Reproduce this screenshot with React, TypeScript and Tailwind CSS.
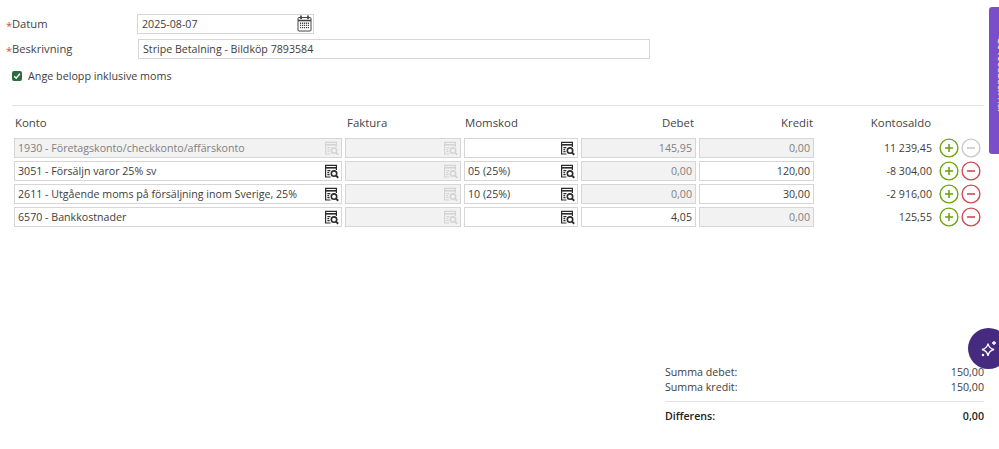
import React from "react";

const SearchIcon = ({ muted }: { muted?: boolean }) => (
  <svg width="15" height="15" viewBox="0 0 15 15" fill="none" stroke={muted ? "#d4d4d4" : "#2b2b2b"} strokeWidth="1.2" className="shrink-0">
    <path d="M6.5 13H1.6V1.4H12.4V6" />
    <path d="M1.6 3.8H12.4" strokeWidth="1.6" />
    <path d="M3.4 6.6H6.4M3.4 8.6H5.2M3.4 10.6H5.6" />
    <circle cx="10" cy="9.6" r="2.7" strokeWidth="1.6" />
    <path d="M12 11.6L14.2 13.7" strokeWidth="1.9" />
  </svg>
);

const CalendarIcon = () => (
  <svg width="15" height="17" viewBox="0 0 15 17" fill="none" stroke="#444" strokeWidth="1">
    <rect x="1" y="2.5" width="13" height="13.5" rx="1" />
    <path d="M1 5.5H14" strokeWidth="1.6" />
    <path d="M4 0.5V4M11 0.5V4" strokeWidth="1.7" />
    <path d="M3 8.2H12M3 10.4H12M3 12.6H12" strokeDasharray="1.2 0.8" strokeWidth="1.4" />
  </svg>
);

const Field = ({ w, value, disabled, icon, muted, right }: { w: string; value?: string; disabled?: boolean; icon?: boolean; muted?: boolean; right?: boolean }) => (
  <div className={`${w} h-[20px] shrink-0 flex items-center border border-[#d6d6d6] pl-[3px] pr-[2px] whitespace-nowrap ${disabled ? "bg-[#f2f2f2] text-[#808080]" : "bg-white text-[#3d3d3d]"} ${right ? "justify-end" : "justify-between"}`}>
    <span className={right ? "pr-[1px]" : ""}>{value}</span>
    {icon && <SearchIcon muted={muted} />}
  </div>
);

const RoundBtn = ({ kind }: { kind: "plus" | "minus" | "off" }) => {
  const color = kind === "plus" ? "#6fa50f" : kind === "minus" ? "#cf4a55" : "#c9c9c9";
  return (
    <svg width="20" height="20" viewBox="0 0 20 20" fill="none" stroke={color} className="shrink-0">
      <circle cx="10" cy="10" r="8.9" strokeWidth="1.4" />
      <path d="M6 10H14" strokeWidth="1.6" />
      {kind === "plus" && <path d="M10 6V14" strokeWidth="1.6" />}
    </svg>
  );
};

const Star = () => <span className="text-[#b5545a] inline-block w-[6px] translate-y-[2px]">*</span>;

const rows = [
  { konto: "1930 - Företagskonto/checkkonto/affärskonto", kd: true, moms: "", debet: "145,95", dd: true, kredit: "0,00", krd: true, saldo: "11 239,45", off: true },
  { konto: "3051 - Försäljn varor 25% sv", kd: false, moms: "05 (25%)", debet: "0,00", dd: true, kredit: "120,00", krd: false, saldo: "-8 304,00", off: false },
  { konto: "2611 - Utgående moms på försäljning inom Sverige, 25%", kd: false, moms: "10 (25%)", debet: "0,00", dd: true, kredit: "30,00", krd: false, saldo: "-2 916,00", off: false },
  { konto: "6570 - Bankkostnader", kd: false, moms: "", debet: "4,05", dd: false, kredit: "0,00", krd: true, saldo: "125,55", off: false },
];

export default function App() {
  return (
    <div className="relative w-[999px] h-[449px] overflow-hidden bg-white text-[10.65px] leading-[16px] text-[#3d3d3d] font-['Open_Sans','Noto_Sans',sans-serif]">
      <div className="pt-[14px] pl-[6px]">
        <div className="flex items-center h-[19px]">
          <span className="w-[131px] text-[#444] text-[11.2px]"><Star />Datum</span>
          <div className="w-[177px] h-[20px] flex items-center justify-between border border-[#d6d6d6] pl-[4px] pr-[1px]">
            <span>2025-08-07</span>
            <CalendarIcon />
          </div>
        </div>
        <div className="flex items-center h-[20px] mt-[6px]">
          <span className="w-[132px] text-[#444] text-[11.2px]"><Star />Beskrivning</span>
          <div className="w-[512px] h-[20px] flex items-center border border-[#d6d6d6] pl-[4px]">Stripe Betalning - Bildköp 7893584</div>
        </div>
        <div className="flex items-center gap-[6px] ml-[6px] mt-[9px] h-[16px]">
          <span className="w-[10px] h-[10px] rounded-[2px] bg-[#2e6b3e] flex items-center justify-center">
            <svg width="8" height="8" viewBox="0 0 8 8" fill="none" stroke="#fff" strokeWidth="1.5"><path d="M1.2 4.2L3.2 6.2L6.9 1.8" /></svg>
          </span>
          <span className="text-[10.75px]">Ange belopp inklusive moms</span>
        </div>
      </div>

      <div className="mx-[12px] w-[972px] mt-[21px] border-t border-[#e4e4e4]" />

      <div className="pl-[15px] mt-[9px] flex h-[16px] text-[#444] text-[11.4px]">
        <span className="w-[332px]">Konto</span>
        <span className="w-[118px]">Faktura</span>
        <span className="w-[115px]">Momskod</span>
        <span className="w-[114px] text-right">Debet</span>
        <span className="w-[119px] text-right">Kredit</span>
        <span className="w-[118px] text-right">Kontosaldo</span>
      </div>

      <div className="pl-[14px] mt-[7px] flex flex-col gap-[3px]">
        {rows.map((r) => (
          <div key={r.konto} className="flex items-center gap-[3px]">
            <Field w="w-[328px]" value={r.konto} disabled={r.kd} icon muted={r.kd} />
            <Field w="w-[116px]" disabled icon muted />
            <Field w="w-[114px]" value={r.moms} icon />
            <Field w="w-[115px]" value={r.debet} disabled={r.dd} right />
            <Field w="w-[115px]" value={r.kredit} disabled={r.krd} right />
            <span className="w-[115px] text-right">{r.saldo}</span>
            <div className="ml-[4px] flex gap-[2px]">
              <RoundBtn kind="plus" />
              <RoundBtn kind={r.off ? "off" : "minus"} />
            </div>
          </div>
        ))}
      </div>

      <div className="ml-[665px] w-[319px] mt-[137px]">
        <div className="flex justify-between h-[15px] items-center"><span>Summa debet:</span><span>150,00</span></div>
        <div className="flex justify-between h-[15px] items-center"><span>Summa kredit:</span><span>150,00</span></div>
        <div className="mt-[7px] border-t border-[#e4e4e4]" />
        <div className="mt-[6px] flex justify-between font-semibold text-[#222]"><span>Differens:</span><span>0,00</span></div>
      </div>

      <div className="absolute left-[989px] top-[7px] w-[14px] h-[147px] rounded-[3px] bg-[#7a4ecb] overflow-hidden">
        <span className="absolute left-[8px] top-[30px] text-white text-[10px] leading-[10px] whitespace-nowrap [writing-mode:vertical-rl]">Ge feedback här</span>
      </div>

      <div className="absolute left-[968px] top-[328px] w-[41px] h-[41px] rounded-full bg-[#452a7f] flex items-center justify-start pl-[12px]">
        <svg width="18" height="18" viewBox="0 0 18 18" fill="none" stroke="#fff" strokeWidth="1.3">
          <path d="M8 3.5C8.6 7 10 8.6 14 9.5C10 10.4 8.6 12 8 16C7.4 12 6 10.4 2 9.5C6 8.6 7.4 7 8 3.5Z" />
          <path d="M14 1V5M12 3H16" />
          <circle cx="3" cy="15" r="0.6" fill="#fff" />
        </svg>
      </div>
    </div>
  );
}
